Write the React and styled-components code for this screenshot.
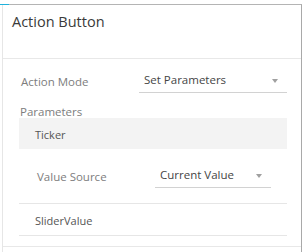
import React from 'react';
import styled, { createGlobalStyle } from 'styled-components';

const GlobalStyle = createGlobalStyle`
  html, body {
    margin: 0;
    padding: 0;
    background: #ffffff;
  }
  body {
    font-family: "Open Sans", "Liberation Sans", sans-serif;
  }
`;

const Panel = styled.div`
  position: relative;
  width: 300px;
  height: 248px;
  margin: 4px 0 0 2px;
  border-top: 1px solid #b4b4b4;
  border-left: 1px solid #e6e6e6;
  border-right: 1px solid #a9a9a9;
  box-sizing: border-box;
  &::before {
    content: '';
    position: absolute;
    top: -1px;
    left: -3px;
    width: 9px;
    height: 1px;
    background: #1fb2dc;
  }
`;

const Header = styled.div`
  height: 54px;
  padding: 7px 0 0 9px;
  box-sizing: border-box;
  border-bottom: 1px solid #e8e8e8;
`;

const Title = styled.div`
  font-size: 14.5px;
  line-height: 20px;
  color: #3a3a3a;
`;

const Body = styled.div`
  padding: 7px 14px 10px 16px;
  border-bottom: 1px solid #e8e8e8;
`;

const FieldRow = styled.div`
  display: flex;
  align-items: flex-start;
  padding: ${({ nested }) => (nested ? '12px 16px 15px' : '0')};
`;

const Label = styled.div`
  width: 120px;
  flex: none;
  padding: 8px 0 0 2px;
  box-sizing: border-box;
  font-size: 11.5px;
  line-height: 16px;
  color: #7d7d7d;
`;

const Select = styled.div`
  flex: 1;
  display: flex;
  align-items: flex-start;
  justify-content: space-between;
  height: 27px;
  padding: 6px 9px 0 5px;
  box-sizing: border-box;
  border-bottom: 1px solid #d2d2d2;
  font-size: 11.5px;
  line-height: 16px;
  color: #454545;
`;

const Caret = styled.span`
  margin-top: 7px;
  width: 0;
  height: 0;
  border-left: 3.5px solid transparent;
  border-right: 3.5px solid transparent;
  border-top: 4px solid #a0a0a0;
`;

const SectionLabel = styled.div`
  height: 25px;
  padding: 12px 0 0 1px;
  box-sizing: border-box;
  font-size: 11.5px;
  line-height: 13px;
  color: #7d7d7d;
`;

const ParamItem = styled.div`
  border-bottom: 1px solid #e6e6e6;
`;

const ParamHead = styled.div`
  height: 31px;
  display: flex;
  align-items: center;
  padding: 2px 0 0 16px;
  box-sizing: border-box;
  background: ${({ selected }) => (selected ? '#f3f3f3' : 'transparent')};
  font-size: 11px;
  color: #555555;
`;

const Dropdown = ({ value }) => (
  <Select>
    <span>{value}</span>
    <Caret />
  </Select>
);

export default function App() {
  return (
    <>
      <GlobalStyle />
      <Panel>
        <Header>
          <Title>Action Button</Title>
        </Header>
        <Body>
          <FieldRow>
            <Label>Action Mode</Label>
            <Dropdown value="Set Parameters" />
          </FieldRow>
          <SectionLabel>Parameters</SectionLabel>
          <div>
            <ParamItem>
              <ParamHead selected>Ticker</ParamHead>
              <FieldRow nested>
                <Label>Value Source</Label>
                <Dropdown value="Current Value" />
              </FieldRow>
            </ParamItem>
            <ParamItem>
              <ParamHead>SliderValue</ParamHead>
            </ParamItem>
          </div>
        </Body>
      </Panel>
    </>
  );
}
